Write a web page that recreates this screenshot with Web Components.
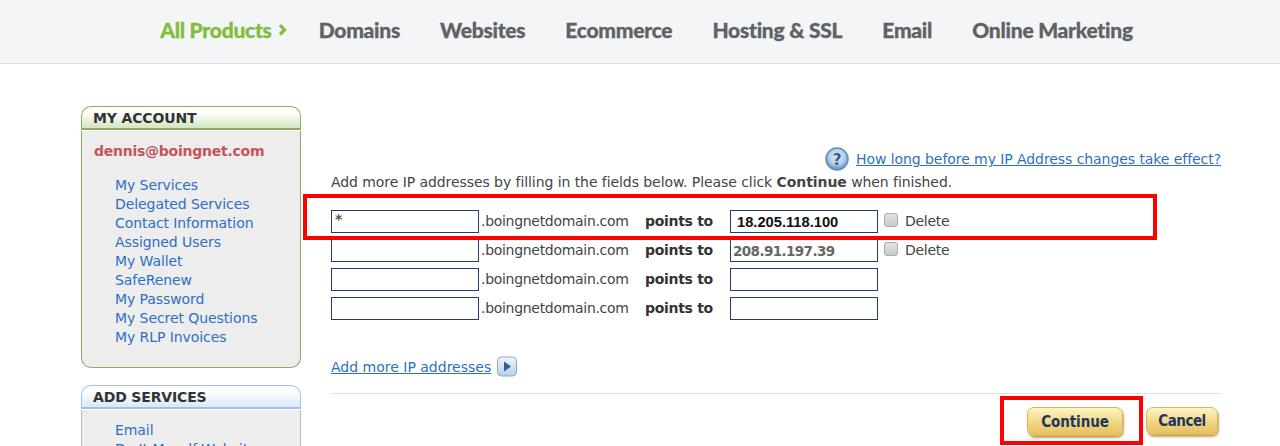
<!DOCTYPE html>
<html>
<head>
<meta charset="utf-8">
<title>Manage IP addresses</title>
<style>
    html, body { margin: 0; height: 446px; overflow: hidden; background: #fff; }
    body { font-family: "DejaVu Sans", Verdana, sans-serif; font-size: 14px; color: #333; }
</style>
</head>
<body>
<account-page></account-page>
<script>
class SiteNav extends HTMLElement {
    constructor() {
        super();
        this.attachShadow({ mode: 'open' });
        this.shadowRoot.innerHTML = `
            <style>
                :host {
                    display: flex;
                    justify-content: center;
                    align-items: center;
                    gap: 40px;
                    box-sizing: content-box;
                    height: 59px;
                    padding: 0 0 4px 13px;
                    background: #f3f5f7;
                    border-bottom: 1px solid #dcdfe2;
                    font: 900 21px Lato, sans-serif;
                    color: #5f6265;
                    letter-spacing: -0.25px;
                    -webkit-text-stroke: 0.3px currentColor;
                }
                .active {
                    display: inline-flex;
                    align-items: center;
                    gap: 6px;
                    margin-right: -8px;
                    color: #82bd3c;
                }
            </style>
            <span class="active">All Products
                <svg width="9" height="13" viewBox="0 0 9 13"><path d="M2 2 L6.5 7 L2 11.5" fill="none" stroke="#82bd3c" stroke-width="3.2"/></svg>
            </span>
            <span>Domains</span>
            <span>Websites</span>
            <span>Ecommerce</span>
            <span>Hosting &amp; SSL</span>
            <span>Email</span>
            <span>Online Marketing</span>
        `;
    }
}

class SidePanel extends HTMLElement {
    constructor() {
        super();
        this.attachShadow({ mode: 'open' });
        const title = this.getAttribute('heading');
        this.shadowRoot.innerHTML = `
            <style>
                :host {
                    display: block;
                    --line: #8bab60;
                    --tint: #d3e6bd;
                }
                :host([tone="blue"]) {
                    --line: #a3c0dd;
                    --tint: #d9e8f8;
                }
                .head {
                    height: 21px;
                    padding-left: 11px;
                    border: 1px solid var(--line);
                    border-bottom-width: 2px;
                    border-radius: 10px 10px 0 0;
                    background: linear-gradient(#fff 25%, var(--tint));
                    font-weight: bold;
                    font-size: 14px;
                    line-height: 22px;
                    letter-spacing: -0.15px;
                    color: #333;
                }
                .body {
                    margin-top: 1px;
                    padding: 10px 0 20px;
                    border: 1px solid var(--line);
                    border-top: 0;
                    border-radius: 0 0 10px 10px;
                    background: #ededed;
                }
            </style>
            <div class="head">${title}</div>
            <div class="body"><slot></slot></div>
        `;
    }
}

class SideLinks extends HTMLElement {
    constructor() {
        super();
        this.attachShadow({ mode: 'open' });
        this.shadowRoot.innerHTML = `
            <style>
                :host {
                    display: flex;
                    flex-direction: column;
                    padding-left: 33px;
                    font-size: 14px;
                    line-height: 19px;
                    letter-spacing: -0.08px;
                    color: #2f6fc4;
                }
            </style>
            <slot></slot>
        `;
    }
}

class IpRow extends HTMLElement {
    constructor() {
        super();
        this.attachShadow({ mode: 'open' });
        const name = this.getAttribute('name') || '';
        const ip = this.getAttribute('ip');
        const current = this.hasAttribute('current');
        this.shadowRoot.innerHTML = `
            <style>
                :host {
                    display: flex;
                    align-items: center;
                    height: 23px;
                    font-size: 14px;
                    color: #444;
                }
                .field {
                    box-sizing: border-box;
                    width: 148px;
                    height: 23px;
                    padding: 0 2px 5px 3px;
                    border: 1px solid #1f3f73;
                    background: #fff;
                    font-weight: bold;
                    line-height: 17px;
                    color: #555;
                }
                .domain { width: 164px; padding: 0 0 2px 2px; letter-spacing: -0.3px; }
                .points { width: 85px; padding-bottom: 2px; font-weight: bold; letter-spacing: -0.3px; color: #333; }
                .ip {
                    padding: 0 0 0 2px;
                    font-size: 13.5px;
                    letter-spacing: -0.6px;
                    line-height: 23px;
                    color: #666;
                }
                .ip.current { padding-left: 6px; font: bold 14.7px "Liberation Sans", sans-serif; letter-spacing: 0; line-height: 23px; color: #111; }
                .box {
                    box-sizing: border-box;
                    width: 14px;
                    height: 14px;
                    margin: -3px 7px 0 6px;
                    border: 1px solid #aaa;
                    border-radius: 3px;
                    background: linear-gradient(#e2e2e2, #c9c9c9);
                }
                .del { padding-bottom: 2px; letter-spacing: -0.3px; }
            </style>
            <div class="field">${name}</div>
            <span class="domain">.boingnetdomain.com</span>
            <span class="points">points to</span>
            <div class="field ip ${current ? 'current' : ''}">${ip || ''}</div>
            ${ip ? '<span class="box"></span><span class="del">Delete</span>' : ''}
        `;
    }
}

class GoldButton extends HTMLElement {
    constructor() {
        super();
        this.attachShadow({ mode: 'open' });
        this.shadowRoot.innerHTML = `
            <style>
                :host {
                    display: inline-flex;
                    align-items: center;
                    justify-content: center;
                    box-sizing: border-box;
                    height: 28px;
                    border: 1px solid #d9b45f;
                    border-radius: 7px;
                    background: linear-gradient(#fdf5c4, #f0d682 55%, #e4c062);
                    box-shadow: 1px 2px 2px #c9a25a;
                    font: bold 15px "DejaVu Sans Condensed", "DejaVu Sans", sans-serif;
                    color: #1f3560;
                }
            </style>
            <slot></slot>
        `;
    }
}

class RedBox extends HTMLElement {
    constructor() {
        super();
        this.attachShadow({ mode: 'open' });
        this.shadowRoot.innerHTML = `
            <style>
                :host {
                    position: absolute;
                    box-sizing: border-box;
                    border: 4px solid #f00;
                    pointer-events: none;
                }
            </style>
        `;
    }
}

class HelpIcon extends HTMLElement {
    constructor() {
        super();
        this.attachShadow({ mode: 'open' });
        this.shadowRoot.innerHTML = `
            <style>
                :host { display: inline-flex; width: 24px; height: 24px; }
                text { font: bold 15px "DejaVu Sans", sans-serif; }
            </style>
            <svg width="24" height="24" viewBox="0 0 24 24">
                <defs>
                    <radialGradient id="g" cx="50%" cy="40%" r="58%">
                        <stop offset="0" stop-color="#dfe9f4"/>
                        <stop offset="0.6" stop-color="#b9cfe6"/>
                        <stop offset="1" stop-color="#5f8fc2"/>
                    </radialGradient>
                </defs>
                <circle cx="12" cy="12" r="11" fill="url(#g)" stroke="#5f8fc2" stroke-width="1.5"/>
                <text x="12" y="17.5" text-anchor="middle" fill="#2f5f9c">?</text>
            </svg>
        `;
    }
}

class ArrowButton extends HTMLElement {
    constructor() {
        super();
        this.attachShadow({ mode: 'open' });
        this.shadowRoot.innerHTML = `
            <style>
                :host { display: inline-flex; width: 21px; height: 22px; }
            </style>
            <svg width="21" height="22" viewBox="0 0 21 22">
                <defs>
                    <linearGradient id="b" x1="0" y1="0" x2="0" y2="1">
                        <stop offset="0" stop-color="#f1f5fa"/>
                        <stop offset="1" stop-color="#b8cee6"/>
                    </linearGradient>
                </defs>
                <rect x="0.5" y="1" width="19" height="19" rx="4" fill="url(#b)" stroke="#8aa9cb"/>
                <path d="M7 5.5 L14 10.5 L7 15.5 Z" fill="#2f5f97"/>
            </svg>
        `;
    }
}

class AccountPage extends HTMLElement {
    constructor() {
        super();
        this.attachShadow({ mode: 'open' });
        this.shadowRoot.innerHTML = `
            <style>
                :host { display: block; position: relative; height: 446px; overflow: hidden; }
                .layout {
                    display: grid;
                    grid-template-columns: 220px 890px;
                    column-gap: 30px;
                    padding: 42px 0 0 81px;
                }
                .side { display: flex; flex-direction: column; gap: 17px; }
                .user {
                    padding: 0 0 15px 12px;
                    font-weight: bold;
                    font-size: 14px;
                    line-height: 20px;
                    letter-spacing: -0.25px;
                    color: #c4545a;
                }
                .add-links { margin-top: 1px; }
                .main { padding-top: 41px; letter-spacing: -0.07px; }
                .help {
                    display: flex;
                    justify-content: flex-end;
                    align-items: center;
                    gap: 7px;
                    height: 24px;
                    color: #2f6fc4;
                }
                .help span { text-decoration: underline; }
                .intro { height: 38px; margin-top: 1px; line-height: 21px; color: #444; }
                .rows { display: flex; flex-direction: column; gap: 6px; }
                .more {
                    display: flex;
                    align-items: center;
                    gap: 6px;
                    margin-top: 36px;
                    height: 22px;
                    letter-spacing: 0;
                    color: #2f6fc4;
                }
                .more span { text-decoration: underline; }
                hr { margin: 15px 0 13px; border: 0; border-top: 1px solid #dde3ea; }
                .actions { display: flex; justify-content: flex-end; gap: 23px; padding-right: 3px; }
                .continue { width: 96px; height: 29px; }
                .cancel { width: 72px; letter-spacing: -0.5px; }
                .mark1 { left: 303px; top: 194px; width: 854px; height: 46px; }
                .mark2 { left: 1000px; top: 396px; width: 143px; height: 49px; }
            </style>
            <site-nav></site-nav>
            <div class="layout">
                <div class="side">
                    <side-panel heading="MY ACCOUNT">
                        <div class="user">dennis@boingnet.com</div>
                        <side-links>
                            <span>My Services</span>
                            <span>Delegated Services</span>
                            <span>Contact Information</span>
                            <span>Assigned Users</span>
                            <span>My Wallet</span>
                            <span>SafeRenew</span>
                            <span>My Password</span>
                            <span>My Secret Questions</span>
                            <span>My RLP Invoices</span>
                        </side-links>
                    </side-panel>
                    <side-panel heading="ADD SERVICES" tone="blue">
                        <side-links class="add-links">
                            <span>Email</span>
                            <span>Do It Myself Website</span>
                        </side-links>
                    </side-panel>
                </div>
                <div class="main">
                    <div class="help"><help-icon></help-icon><span>How long before my IP Address changes take effect?</span></div>
                    <div class="intro">Add more IP addresses by filling in the fields below. Please click <b>Continue</b> when finished.</div>
                    <div class="rows">
                        <ip-row name="*" ip="18.205.118.100" current></ip-row>
                        <ip-row ip="208.91.197.39"></ip-row>
                        <ip-row></ip-row>
                        <ip-row></ip-row>
                    </div>
                    <div class="more"><span>Add more IP addresses</span><arrow-button></arrow-button></div>
                    <hr>
                    <div class="actions">
                        <gold-button class="continue">Continue</gold-button>
                        <gold-button class="cancel">Cancel</gold-button>
                    </div>
                </div>
            </div>
            <red-box class="mark1"></red-box>
            <red-box class="mark2"></red-box>
        `;
    }
}

customElements.define('site-nav', SiteNav);
customElements.define('side-panel', SidePanel);
customElements.define('side-links', SideLinks);
customElements.define('ip-row', IpRow);
customElements.define('gold-button', GoldButton);
customElements.define('red-box', RedBox);
customElements.define('help-icon', HelpIcon);
customElements.define('arrow-button', ArrowButton);
customElements.define('account-page', AccountPage);
</script>
</body>
</html>
